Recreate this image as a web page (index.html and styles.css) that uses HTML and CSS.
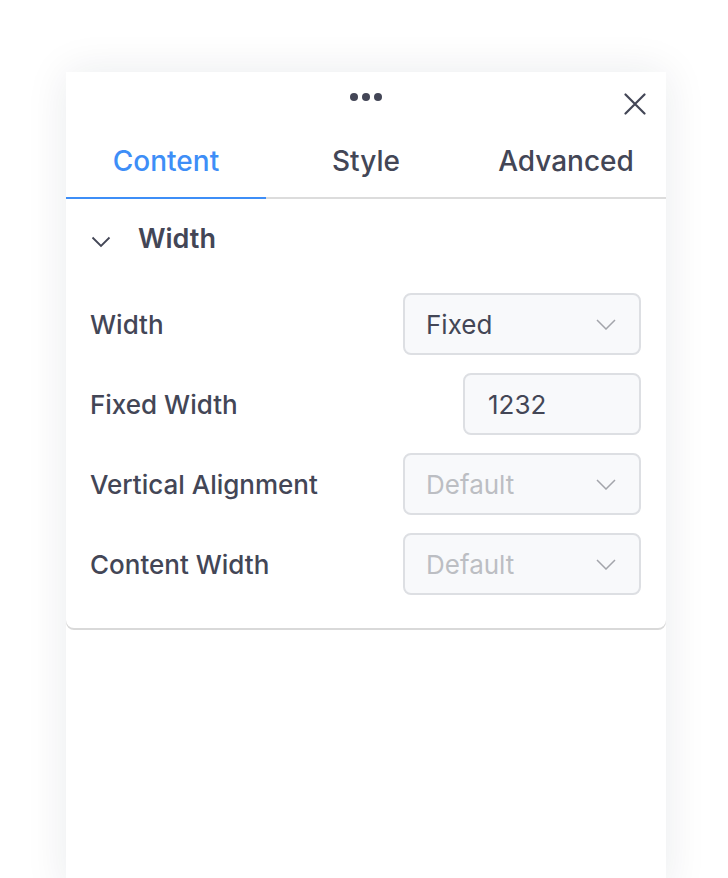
FILE: index.html
```html
<!DOCTYPE html>
<html>
<head>
<meta charset="utf-8">
<link rel="stylesheet" href="styles.css">
</head>
<body>
<div class="panel">
  <div class="header">
    <div class="spacer"></div>
    <div class="dots"><span></span><span></span><span></span></div>
    <div class="close">
      <svg width="22" height="22" viewBox="0 0 22 22"><path d="M1.5 1.5 L20.5 20.5 M20.5 1.5 L1.5 20.5" stroke="#434656" stroke-width="2.2" stroke-linecap="round" fill="none"/></svg>
    </div>
  </div>
  <div class="tabs">
    <div class="tab active">Content</div>
    <div class="tab">Style</div>
    <div class="tab">Advanced</div>
  </div>
  <div class="section">
    <div class="section-head">
      <svg class="chev" width="20" height="12" viewBox="0 0 20 12"><path d="M1.5 1.5 L10 10 L18.5 1.5" stroke="#434656" stroke-width="1.8" fill="none"/></svg>
      <span class="section-title">Width</span>
    </div>
    <div class="rows">
      <div class="row">
        <span class="label">Width</span>
        <div class="select"><span class="val">Fixed</span><svg width="20" height="11" viewBox="0 0 20 11"><path d="M1 1 L10 10 L19 1" stroke="#a3a5ab" stroke-width="1.5" fill="none"/></svg></div>
      </div>
      <div class="row">
        <span class="label">Fixed Width</span>
        <div class="input"><span class="val">1232</span></div>
      </div>
      <div class="row">
        <span class="label">Vertical Alignment</span>
        <div class="select"><span class="val ph">Default</span><svg width="20" height="11" viewBox="0 0 20 11"><path d="M1 1 L10 10 L19 1" stroke="#a3a5ab" stroke-width="1.5" fill="none"/></svg></div>
      </div>
      <div class="row">
        <span class="label">Content Width</span>
        <div class="select"><span class="val ph">Default</span><svg width="20" height="11" viewBox="0 0 20 11"><path d="M1 1 L10 10 L19 1" stroke="#a3a5ab" stroke-width="1.5" fill="none"/></svg></div>
      </div>
    </div>
  </div>
</div>
</body>
</html>
```

FILE: styles.css
```css
html, body {
  margin: 0;
  padding: 0;
  background: #ffffff;
  font-family: "Inter", "Noto Sans", sans-serif;
  color: #434656;
  overflow: hidden;
}
body {
  padding: 72px 0 0 66px;
  height: 878px;
  box-sizing: border-box;
}
.panel {
  width: 600px;
  min-height: 820px;
  background: #fff;
  box-shadow: 0 0 40px rgba(20, 30, 60, 0.09);
  display: flex;
  flex-direction: column;
}
.header {
  height: 60px;
  display: grid;
  grid-template-columns: 1fr auto 1fr;
}
.dots {
  display: flex;
  gap: 4px;
  margin-top: 21px;
  align-self: start;
}
.dots span {
  width: 8px;
  height: 8px;
  border-radius: 50%;
  background: #434656;
}
.close {
  justify-self: end;
  margin-top: 21px;
  margin-right: 20px;
  height: 22px;
}
.tabs {
  display: flex;
  border-bottom: 2px solid #dcdcdc;
}
.tab {
  flex: 1;
  text-align: center;
  font-size: 28px;
  font-weight: 500;
  line-height: 32px;
  padding: 13px 0 20px;
}
.tab.active {
  color: #3e8ef7;
  border-bottom: 2px solid #3e8ef7;
  margin-bottom: -2px;
}
.section {
  background: #fff;
  border-radius: 0 0 8px 8px;
  box-shadow: 0 2px 0 #d9d9d9;
  padding: 23px 25px 33px 24px;
}
.section-head {
  display: flex;
  align-items: center;
  height: 32px;
}
.chev {
  margin-left: 1px;
  margin-top: 8px;
}
.section-title {
  margin-left: 27px;
  font-size: 27px;
  font-weight: 600;
}
.rows {
  margin-top: 39px;
  display: flex;
  flex-direction: column;
  gap: 18px;
}
.row {
  display: flex;
  align-items: center;
  justify-content: space-between;
  height: 62px;
}
.label {
  font-size: 26px;
  font-weight: 500;
}
.select, .input {
  height: 62px;
  box-sizing: border-box;
  border: 2px solid #dddfe3;
  border-radius: 8px;
  background: #f8f9fb;
  display: flex;
  align-items: center;
  justify-content: space-between;
}
.select {
  width: 238px;
  padding: 0 23px 0 21px;
}
.input {
  width: 178px;
  padding: 0 20px 0 23px;
}
.val {
  font-size: 26px;
  font-weight: 400;
  color: #434656;
}
.val.ph {
  color: #bcbec3;
}
```
